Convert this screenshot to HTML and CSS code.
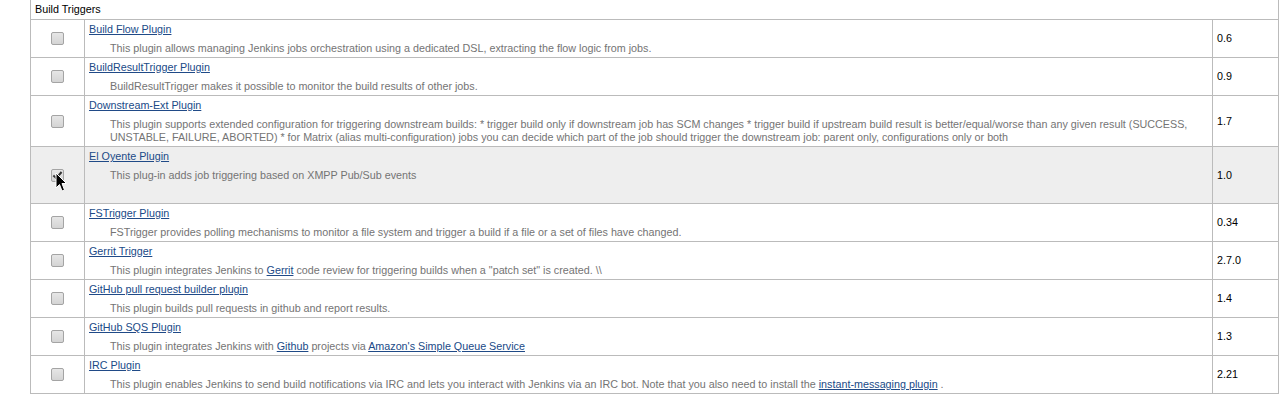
FILE: index.html
```html
<!DOCTYPE html>
<html>
<head>
<meta charset="utf-8">
<link rel="stylesheet" href="styles.css">
</head>
<body>
<table class="plugins">
  <colgroup>
    <col class="c-check">
    <col class="c-desc">
    <col class="c-ver">
  </colgroup>
  <tr class="cat-row"><td colspan="3" class="cat">Build Triggers</td></tr>
  <tr>
    <td class="check"><input type="checkbox" class="cb"></td>
    <td class="info"><div class="title"><a href="#">Build Flow Plugin</a></div><div class="desc">This plugin allows managing Jenkins jobs orchestration using a dedicated DSL, extracting the flow logic from jobs.</div></td>
    <td class="ver">0.6</td>
  </tr>
  <tr>
    <td class="check"><input type="checkbox" class="cb"></td>
    <td class="info"><div class="title"><a href="#">BuildResultTrigger Plugin</a></div><div class="desc">BuildResultTrigger makes it possible to monitor the build results of other jobs.</div></td>
    <td class="ver">0.9</td>
  </tr>
  <tr>
    <td class="check"><input type="checkbox" class="cb"></td>
    <td class="info"><div class="title"><a href="#">Downstream-Ext Plugin</a></div><div class="desc">This plugin supports extended configuration for triggering downstream builds: * trigger build only if downstream job has SCM changes * trigger build if upstream build result is better/equal/worse than any given result (SUCCESS, UNSTABLE, FAILURE, ABORTED) * for Matrix (alias multi-configuration) jobs you can decide which part of the job should trigger the downstream job: parent only, configurations only or both</div></td>
    <td class="ver">1.7</td>
  </tr>
  <tr class="hl">
    <td class="check"><span class="cbwrap"><input type="checkbox" class="cb" checked><svg class="cursor" width="13" height="21" viewBox="0 0 13 21"><path d="M1 1 L1 16 L4.5 12.5 L7 19 L9.5 18 L7 11.5 L11.5 11.5 Z" fill="#000" stroke="#fff" stroke-width="1" stroke-linejoin="miter"/></svg></span></td>
    <td class="info"><div class="title"><a href="#">El Oyente Plugin</a></div><div class="desc">This plug-in adds job triggering based on XMPP Pub/Sub events</div><div class="deps"></div></td>
    <td class="ver">1.0</td>
  </tr>
  <tr>
    <td class="check"><input type="checkbox" class="cb"></td>
    <td class="info"><div class="title"><a href="#">FSTrigger Plugin</a></div><div class="desc">FSTrigger provides polling mechanisms to monitor a file system and trigger a build if a file or a set of files have changed.</div></td>
    <td class="ver">0.34</td>
  </tr>
  <tr>
    <td class="check"><input type="checkbox" class="cb"></td>
    <td class="info"><div class="title"><a href="#">Gerrit Trigger</a></div><div class="desc">This plugin integrates Jenkins to <a href="#">Gerrit</a> code review for triggering builds when a "patch set" is created. \\</div></td>
    <td class="ver">2.7.0</td>
  </tr>
  <tr>
    <td class="check"><input type="checkbox" class="cb"></td>
    <td class="info"><div class="title"><a href="#">GitHub pull request builder plugin</a></div><div class="desc">This plugin builds pull requests in github and report results.</div></td>
    <td class="ver">1.4</td>
  </tr>
  <tr>
    <td class="check"><input type="checkbox" class="cb"></td>
    <td class="info"><div class="title"><a href="#">GitHub SQS Plugin</a></div><div class="desc">This plugin integrates Jenkins with <a href="#">Github</a> projects via <a href="#">Amazon's Simple Queue Service</a></div></td>
    <td class="ver">1.3</td>
  </tr>
  <tr>
    <td class="check"><input type="checkbox" class="cb"></td>
    <td class="info"><div class="title"><a href="#">IRC Plugin</a></div><div class="desc">This plugin enables Jenkins to send build notifications via IRC and lets you interact with Jenkins via an IRC bot. Note that you also need to install the <a href="#">instant-messaging plugin</a> .</div></td>
    <td class="ver">2.21</td>
  </tr>
</table>
</body>
</html>
```
FILE: styles.css
```css
html, body {
  margin: 0;
  padding: 0;
  background: #fff;
}
body {
  font-family: "Liberation Sans", Arial, sans-serif;
  font-size: 10.75px;
  line-height: 13px;
  color: #000;
}
.plugins {
  margin-left: 30px;
  border-collapse: collapse;
  table-layout: fixed;
  width: 1248px;
}
.c-check { width: 54px; }
.c-desc { width: 1128px; }
.c-ver { width: 66px; }
.plugins td {
  border: 1px solid #bbb;
  padding: 3px 4px;
}
.plugins td.info {
  padding-bottom: 2px;
}
.plugins td.cat {
  border-top: none;
  height: 13px;
}
.check {
  text-align: center;
  vertical-align: middle;
}
.info {
  vertical-align: top;
}
.ver {
  vertical-align: middle;
}
.hl td {
  background: #eeeeee;
}
a {
  color: #204a87;
  text-decoration: underline;
}
.desc {
  margin-top: 6px;
  padding-left: 21px;
  color: #747474;
}
.deps {
  height: 19px;
}
.cb {
  appearance: none;
  -webkit-appearance: none;
  width: 13px;
  height: 13px;
  margin: 0;
  border: 1px solid #a4a4a4;
  border-radius: 2px;
  background: linear-gradient(#e6e6e6, #d4d4d4);
  vertical-align: middle;
  display: inline-block;
  position: relative;
  box-sizing: border-box;
}
.cb:checked::after {
  content: "";
  position: absolute;
  left: 3px;
  top: 0px;
  width: 3px;
  height: 7px;
  border: solid #333;
  border-width: 0 2px 2px 0;
  transform: rotate(40deg);
}
.cbwrap {
  position: relative;
  display: inline-block;
  line-height: 0;
}
.cursor {
  position: absolute;
  left: 4px;
  top: 3px;
}
```
